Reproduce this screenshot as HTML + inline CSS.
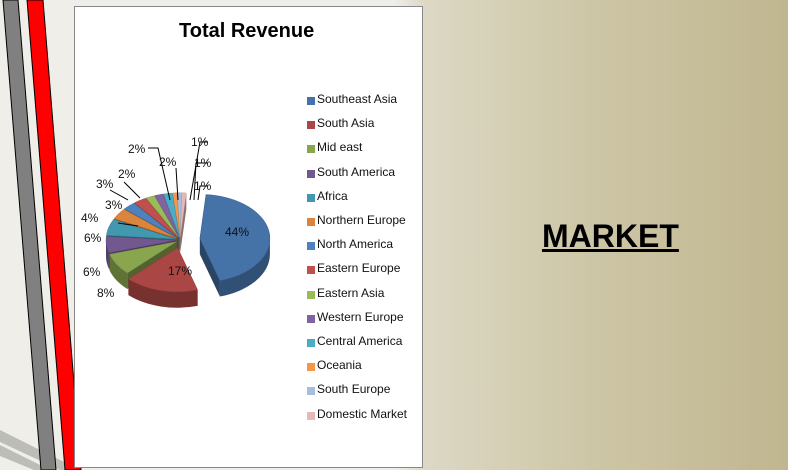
<!DOCTYPE html>
<html><head><meta charset="utf-8"><style>
html,body{margin:0;padding:0}
body{width:788px;height:470px;position:relative;overflow:hidden;font-family:"Liberation Sans",sans-serif;
background:linear-gradient(to right,#efeee8 0%,#efeee8 50%,#dcd8c4 54%,#cdc6a6 75%,#c0b690 100%)}
#chart{position:absolute;left:74px;top:6px;width:349px;height:462px;background:#fff;border:1px solid #888;box-sizing:border-box}
.t{position:absolute;font-size:12px;color:#111;white-space:nowrap}
.lg{position:absolute;left:307px;width:8px;height:8px}
.lt{position:absolute;left:317px;font-size:12px;color:#111;white-space:nowrap}
#market{position:absolute;left:542px;top:218px;font-size:32px;font-weight:bold;text-decoration:underline;text-decoration-thickness:3px;color:#000}
</style></head><body>
<svg width="788" height="470" style="position:absolute;left:0;top:0">
<polygon points="0,430 80,470 60,470 0,442" fill="#bdbdb8"/>
<polygon points="0,445 50,470 34,470 0,456" fill="#bdbdb8"/>
<polygon points="3,0 18,0 56,470 41,470" fill="#808080" stroke="#000" stroke-width="1"/>
<polygon points="27,0 43,0 81,470 65,470" fill="#ff0000" stroke="#000" stroke-width="1"/>
</svg>
<div id="chart"></div>
<div style="position:absolute;left:179px;top:20px;font-size:20px;font-weight:bold;color:#000">Total Revenue</div>
<svg id="pie" width="788" height="470" style="position:absolute;left:0;top:0"></svg>
<div class="t" style="left:225px;top:225px">44%</div>
<div class="t" style="left:168px;top:264px">17%</div>
<div class="t" style="left:97px;top:286px">8%</div>
<div class="t" style="left:83px;top:265px">6%</div>
<div class="t" style="left:84px;top:231px">6%</div>
<div class="t" style="left:81px;top:211px">4%</div>
<div class="t" style="left:105px;top:198px">3%</div>
<div class="t" style="left:96px;top:177px">3%</div>
<div class="t" style="left:118px;top:167px">2%</div>
<div class="t" style="left:128px;top:142px">2%</div>
<div class="t" style="left:159px;top:155px">2%</div>
<div class="t" style="left:191px;top:135px">1%</div>
<div class="t" style="left:194px;top:156px">1%</div>
<div class="t" style="left:194px;top:179px">1%</div>
<div id="legend"></div>
<div id="market">MARKET</div>
<script>
var names=["Southeast Asia","South Asia","Mid east","South America","Africa","Northern Europe","North America","Eastern Europe","Eastern Asia","Western Europe","Central America","Oceania","South Europe","Domestic Market"];
var cols=["#4572a7","#aa4643","#89a54e","#71588f","#4198af","#db843d","#4f81bd","#c0504d","#9bbb59","#8064a2","#4bacc6","#f79646","#a5c0dd","#e6b9b8"];
var lg="";
for(var i=0;i<14;i++){var y=97+i*24.2;lg+='<div class="lg" style="top:'+(y)+'px;background:'+cols[i]+'"></div><div class="lt" style="top:'+(y-5)+'px">'+names[i]+'</div>';}
document.getElementById('legend').innerHTML=lg;
var pct=[44,17,8,6,6,4,3,3,2,2,2,1,1,1];
var cx=180,cy=240,rx=70,ry=44,d=16;
function sh(c,f){var n=parseInt(c.slice(1),16);var r=n>>16,g=(n>>8)&255,b=n&255;return 'rgb('+Math.round(r*f)+','+Math.round(g*f)+','+Math.round(b*f)+')';}
var a=-85,sl=[];
for(var i=0;i<14;i++){var s=pct[i]*3.6;sl.push({i:i,a1:a,a2:a+s});a+=s;}
function P(x,y,t){var r=t*Math.PI/180;return [x+rx*Math.cos(r),y+ry*Math.sin(r)];}
var out="",lines="";
sl.forEach(function(o){o.m=(o.a1+o.a2)/2;});
sl.sort(function(p,q){return Math.sin(p.m*Math.PI/180)-Math.sin(q.m*Math.PI/180);});
sl.forEach(function(o){
 var mr=o.m*Math.PI/180,ex=o.i==0?20:(o.i==1?10:4);
 var x=cx+ex*Math.cos(mr),y=cy+ex*Math.sin(mr)*0.8;
 var c=cols[o.i],dk=sh(c,0.6);
 var p1=P(x,y,o.a1),p2=P(x,y,o.a2),lf=(o.a2-o.a1)>180?1:0;
 out+='<path d="M'+x+','+y+'L'+p1+'L'+p1[0]+','+(p1[1]+d)+'L'+x+','+(y+d)+'Z" fill="'+dk+'"/>';
 out+='<path d="M'+x+','+y+'L'+p2+'L'+p2[0]+','+(p2[1]+d)+'L'+x+','+(y+d)+'Z" fill="'+dk+'"/>';
 var s1=Math.max(o.a1,0),s2=Math.min(o.a2,180);
 if(s2>s1){var q1=P(x,y,s1),q2=P(x,y,s2);
  out+='<path d="M'+q1+'A'+rx+','+ry+' 0 0 1 '+q2+'L'+q2[0]+','+(q2[1]+d)+'A'+rx+','+ry+' 0 0 0 '+q1[0]+','+(q1[1]+d)+'Z" fill="'+sh(c,0.7)+'"/>';}
 out+='<path d="M'+x+','+y+'L'+p1+'A'+rx+','+ry+' 0 '+lf+' 1 '+p2+'Z" fill="'+c+'" stroke="'+sh(c,0.85)+'" stroke-width="0.5"/>';
});
var L=[[118,223,138,226],[110,190,128,200],[124,182,140,198],[148,148,158,148,170,200],[176,168,178,200],[208,142,200,142,190,200],[208,163,196,163,194,200],[208,186,200,186,198,200]];
L.forEach(function(p){var s="M"+p[0]+","+p[1];for(var k=2;k<p.length;k+=2)s+="L"+p[k]+","+p[k+1];lines+='<path d="'+s+'" stroke="#000" stroke-width="1" fill="none"/>';});
document.getElementById('pie').innerHTML=out+lines;
</script>
</body></html>
